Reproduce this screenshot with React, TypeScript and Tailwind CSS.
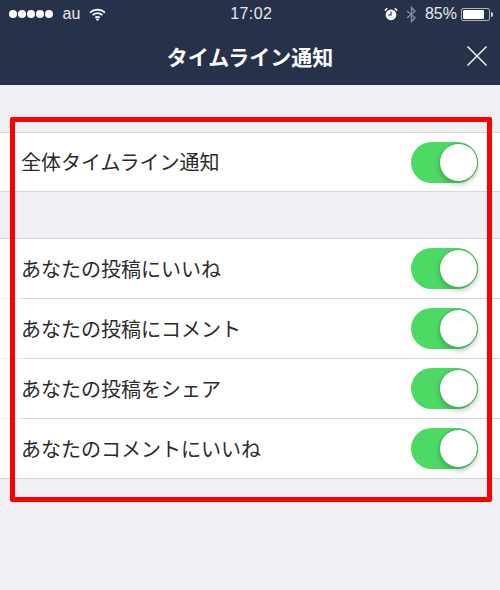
const jp = "font-['Noto_Sans_CJK_JP','Liberation_Sans',sans-serif]";

function Toggle() {
  return (
    <div className="flex h-[41px] w-[67px] shrink-0 items-center justify-end rounded-full bg-[#4cd964]">
      <div className="h-[39px] w-[39px] rounded-full border border-[#3fae55] bg-white shadow-[0_3px_5px_rgba(0,0,0,0.2)]" />
    </div>
  );
}

function Row({ label, tall }: { label: string; tall?: boolean }) {
  return (
    <div className={`flex items-center justify-between bg-white pl-[21px] pr-[22px] ${tall ? "h-[59px]" : "h-[58px]"}`}>
      <span className="text-[20px] font-normal text-[#2a2a2a]">{label}</span>
      <Toggle />
    </div>
  );
}

function Divider() {
  return <div className="ml-[22px] h-px bg-[#d6d6da]" />;
}

function StatusBar() {
  return (
    <div className="relative flex h-[28px] items-center justify-between pl-[9px] pr-[7px] font-['Liberation_Sans',sans-serif] text-[16px] text-[#e8eaee]">
      <div className="flex items-center">
        <div className="flex gap-[1.5px]">
          {[0, 1, 2, 3, 4].map((i) => (
            <div key={i} className="h-[7.5px] w-[7.5px] rounded-full bg-white" />
          ))}
        </div>
        <span className="ml-[10px]">au</span>
        <svg className="ml-[9px]" width="17" height="13" viewBox="0 0 17 13" fill="none" stroke="white" strokeWidth="1.7">
          <path d="M1 4.6C5.4.6 11.6.6 16 4.6" />
          <path d="M3.6 7.2c3-2.6 6.8-2.6 9.8 0" />
          <path d="M6.2 9.6c1.4-1 3.2-1 4.6 0" />
          <path d="M8.5 12.8 7 11h3z" fill="white" strokeWidth="0.6" />
        </svg>
      </div>
      <span className="absolute left-1/2 top-[5px] -translate-x-[47%] leading-[18px] tracking-[0.4px]">17:02</span>
      <div className="flex items-center">
        <svg width="14" height="14" viewBox="0 0 14 14">
          <circle cx="7" cy="7.8" r="5.4" fill="white" />
          <path d="M7 4.4V8h-3" fill="none" stroke="#27324a" strokeWidth="1.2" />
          <path d="M.8 3.6 3.2 1.2M13.2 3.6 10.8 1.2" stroke="white" strokeWidth="1.6" />
        </svg>
        <svg className="ml-[8px]" width="11" height="17" viewBox="0 0 11 16" fill="none" stroke="#7f8694" strokeWidth="1.5">
          <path d="M1 4.5 9 11.2 5.5 15V1L9 4.8 1 11.5" />
        </svg>
        <span className="ml-[8px]">85%</span>
        <div className="ml-[4px] flex h-[13px] w-[29px] rounded-[2px] border border-[#aeb2bb] p-px">
          <div className="h-full w-[85%] rounded-[1px] bg-white" />
        </div>
        <div className="ml-px h-[5px] w-[2px] rounded-r-sm bg-[#d0d3d9]" />
      </div>
    </div>
  );
}

export default function App() {
  return (
    <div className={`relative h-[590px] w-[500px] overflow-hidden bg-[#efeff4] ${jp}`}>
      <div className="h-[85px] bg-[#27324a]">
        <StatusBar />
        <div className="relative flex h-[57px] items-center justify-center">
          <span className="text-[21px] font-bold text-white">タイムライン通知</span>
          <svg className="absolute right-[13px] top-[18px]" width="20" height="20" viewBox="0 0 20 20" stroke="white" strokeWidth="1.4">
            <path d="M0.5 0.5 19.5 19.5M19.5 0.5 0.5 19.5" />
          </svg>
        </div>
      </div>

      <div className="mt-[47px] border-y border-[#d6d6da]">
        <Row label="全体タイムライン通知" />
      </div>

      <div className="mt-[46px] border-y border-[#d6d6da]">
        <Row label="あなたの投稿にいいね" tall />
        <Divider />
        <Row label="あなたの投稿にコメント" tall />
        <Divider />
        <Row label="あなたの投稿をシェア" tall />
        <Divider />
        <Row label="あなたのコメントにいいね" tall />
      </div>

      <div className="absolute left-[10px] top-[117px] h-[385px] w-[482px] rounded-[2px] border-[5px] border-[#fe0000]" />
    </div>
  );
}
